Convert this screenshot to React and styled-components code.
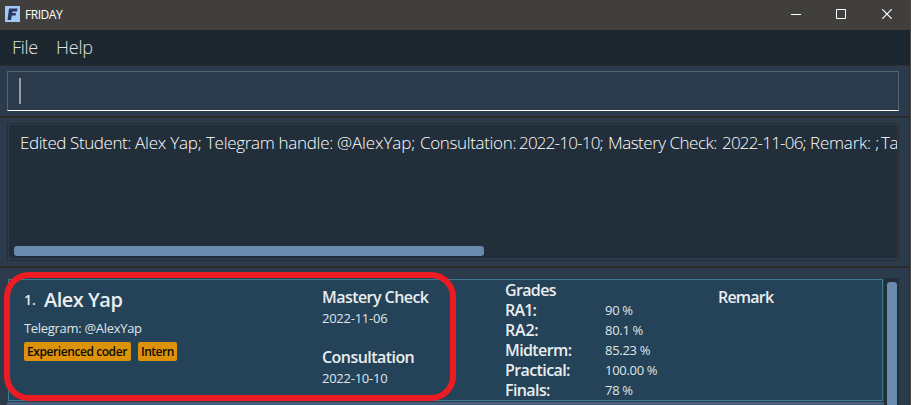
import React from "react";
import styled, { createGlobalStyle } from "styled-components";

const GlobalStyle = createGlobalStyle`
  * { box-sizing: border-box; }
  html, body { margin: 0; background: #2b3b4b; overflow: hidden; }
`;

const Window = styled.div`
  position: relative;
  width: 911px;
  height: 405px;
  overflow: hidden;
  display: flex;
  flex-direction: column;
  background: #2b3b4b;
  border-right: 1px solid #4c4a49;
  font-family: "Open Sans", "Noto Sans", sans-serif;
  white-space: nowrap;
`;

const TitleBar = styled.header`
  flex: none;
  height: 30px;
  margin-right: -1px;
  padding-left: 5px;
  display: flex;
  align-items: center;
  background: #413f3d;
`;

const AppIcon = styled.svg`
  flex: none;
  width: 15px;
  height: 16px;
  margin-top: -2px;
`;

const Title = styled.span`
  flex: 1;
  margin-left: 5px;
  margin-top: -1px;
  color: #fff;
  font-size: 12px;
  line-height: 16px;
  letter-spacing: -0.45px;
`;

const WindowButton = styled.svg`
  flex: none;
  width: 10px;
  height: 10px;
  margin-right: ${(p) => p.$gap}px;
  margin-top: -2px;
  fill: none;
  stroke: #fff;
`;

const MenuBar = styled.nav`
  flex: none;
  height: 36px;
  padding: 5px 12px 0;
  display: flex;
  gap: 18px;
  background: #1d2730;
  border-bottom: 1px solid #2b2f33;
`;

const MenuItem = styled.span`
  width: ${(p) => p.$width}px;
  color: #e0e1e3;
  font-size: 18px;
  font-weight: 300;
  line-height: 24px;
  letter-spacing: ${(p) => p.$tracking}px;
`;

const Pane = styled.section`
  flex: none;
  height: ${(p) => p.$height}px;
  padding: 5px 10px 0 7px;
  border-right: 1px solid #2e2e2e;
  border-bottom: 2px solid #2a2a2a;
`;

const CommandField = styled.div`
  height: 40px;
  padding: 6px 11px;
  border: 1px solid #56626f;
  border-bottom-color: #fff;
`;

const Caret = styled.div`
  width: 2px;
  height: 26px;
  background: #959da5;
`;

const ResultBox = styled.div`
  height: 138px;
  padding: 1px;
  border: 1px solid #2b2d30;
`;

const ResultArea = styled.div`
  height: 133px;
  overflow: hidden;
  display: flex;
  flex-direction: column;
  justify-content: space-between;
  padding: 6px 0 2px;
  border-radius: 2px;
  background: #222e3a;
`;

const ResultText = styled.div`
  display: flex;
  padding-left: 11px;
  color: #fff;
  font-size: 17px;
  font-weight: 300;
  line-height: 24px;
`;

const ResultPart = styled.span`
  flex: none;
  width: ${(p) => p.$width}px;
  letter-spacing: ${(p) => p.$tracking}px;
`;

const HorizontalThumb = styled.div`
  width: 470px;
  height: 10px;
  margin-left: 5px;
  border-radius: 3px;
  background: #698bae;
`;

const ListPane = styled.section`
  flex: 1;
  display: flex;
  align-items: stretch;
  padding: 10px 10px 0 7px;
  border-right: 1px solid #2e2e2e;
`;

const StudentList = styled.div`
  flex: 1;
  display: flex;
  flex-direction: column;
`;

const StudentCard = styled.article`
  flex: none;
  height: 122px;
  margin: 1px;
  display: grid;
  grid-template-columns: 298px 183px 213px 1fr;
  padding-left: 15px;
  background: #254358;
  border: 1px solid #3a7d92;
`;

const NextCard = styled.div`
  flex: 1;
  background: #465d7c;
`;

const VerticalTrack = styled.div`
  flex: none;
  width: 15px;
  padding: 4px 2px 0 3px;
  background: #222e3a;
`;

const VerticalThumb = styled.div`
  height: 130px;
  border-radius: 3px;
  background: #698bae;
`;

const Identity = styled.div`
  display: flex;
  flex-direction: column;
  padding-top: 6px;
`;

const NameRow = styled.div`
  display: flex;
  align-items: center;
  height: 28px;
  margin-bottom: 4px;
  line-height: 28px;
`;

const Index = styled.span`
  width: 20px;
  color: #e4e8ea;
  font-size: 14px;
  font-weight: 600;
`;

const Name = styled.span`
  color: #e9edef;
  font-size: 20px;
  font-weight: 600;
  letter-spacing: -0.5px;
`;

const Detail = styled.span`
  color: #dfe5e9;
  font-size: 13px;
  line-height: 20px;
  letter-spacing: ${(p) => p.$tracking ?? -0.25}px;
`;

const Tags = styled.div`
  display: flex;
  gap: 7px;
  margin-top: 4px;
`;

const Tag = styled.span`
  width: ${(p) => p.$width}px;
  height: 19px;
  padding-left: 3px;
  border-radius: 2px;
  background: #dc930a;
  color: #0c0a06;
  font-size: 12px;
  font-weight: 600;
  line-height: 19px;
  letter-spacing: ${(p) => p.$tracking}px;
`;

const Column = styled.div`
  display: flex;
  flex-direction: column;
  padding-top: ${(p) => p.$top}px;
`;

const Entry = styled.div`
  display: flex;
  flex-direction: column;
  height: 60px;
`;

const Label = styled.span`
  height: 21px;
  color: #e9edef;
  font-size: 16px;
  font-weight: 600;
  line-height: 20px;
  letter-spacing: ${(p) => p.$tracking ?? -0.55}px;
`;

const GradeList = styled.div`
  display: grid;
  grid-template-columns: 100px 1fr;
  grid-auto-rows: 20px;
  margin-top: -1px;
`;

const Highlight = styled.div`
  position: absolute;
  left: 4px;
  top: 272px;
  width: 452px;
  height: 129px;
  border: 6px solid #ed1c24;
  border-radius: 25px;
`;

const result = [
  ["Edited Student: ", 115, -0.41],
  ["Alex Yap; ", 71, -0.2],
  ["Telegram handle: ", 131, -0.3],
  ["@AlexYap; ", 83, -0.1],
  ["Consultation: ", 99, -0.35],
  ["2022-10-10; ", 89, -0.8],
  ["Mastery Check: ", 114, -0.5],
  ["2022-11-06; ", 88, -0.8],
  ["Remark: ; ", 71, -0.2],
  ["Tags: ", 50, -0.3],
];

const grades = [
  ["RA1:", "90 %", -0.8],
  ["RA2:", "80.1 %", -0.2],
  ["Midterm:", "85.23 %", -0.6],
  ["Practical:", "100.00 %", -0.6],
  ["Finals:", "78 %", -0.6],
];

export default function App() {
  return (
    <Window>
      <GlobalStyle />
      <TitleBar>
        <AppIcon viewBox="0 0 15 16">
          <rect width="15" height="16" fill="#9fcaf8" />
          <path d="M4 2.5H12.5L12 5.5H7.5L7.2 7H11L10.5 9.5H6.8L6 14H2.5Z" fill="#2d355c" />
        </AppIcon>
        <Title>FRIDAY</Title>
        <WindowButton viewBox="0 0 10 10" $gap={35}><path d="M0 5.5H10" /></WindowButton>
        <WindowButton viewBox="0 0 10 10" $gap={36}><path d="M.5 .5H9.5V9.5H.5Z" /></WindowButton>
        <WindowButton viewBox="0 0 10 10" $gap={19}><path d="M.3 .3L9.7 9.7M9.7 .3L.3 9.7" strokeWidth="1.2" /></WindowButton>
      </TitleBar>
      <MenuBar>
        <MenuItem $width={26} $tracking={-0.3}>File</MenuItem>
        <MenuItem $width={37} $tracking={-0.2}>Help</MenuItem>
      </MenuBar>
      <Pane $height={52}>
        <CommandField><Caret /></CommandField>
      </Pane>
      <Pane $height={150}>
        <ResultBox>
          <ResultArea>
            <ResultText>
              {result.map(([text, width, tracking]) => (
                <ResultPart key={text} $width={width} $tracking={tracking}>{text}</ResultPart>
              ))}
            </ResultText>
            <HorizontalThumb />
          </ResultArea>
        </ResultBox>
      </Pane>
      <ListPane>
        <StudentList>
          <StudentCard>
            <Identity>
              <NameRow>
                <Index>1.</Index>
                <Name>Alex Yap</Name>
              </NameRow>
              <Detail $tracking={-0.3}>Telegram: @AlexYap</Detail>
              <Tags>
                <Tag $width={107} $tracking={-0.42}>Experienced coder</Tag>
                <Tag $width={39} $tracking={-0.5}>Intern</Tag>
              </Tags>
            </Identity>
            <Column $top={7}>
              <Entry>
                <Label>Mastery Check</Label>
                <Detail>2022-11-06</Detail>
              </Entry>
              <Entry>
                <Label>Consultation</Label>
                <Detail>2022-10-10</Detail>
              </Entry>
            </Column>
            <Column $top={0}>
              <Label $tracking={-0.65}>Grades</Label>
              <GradeList>
                {grades.map(([label, value, tracking]) => (
                  <React.Fragment key={label}>
                    <Label $tracking={tracking}>{label}</Label>
                    <Detail $tracking={-0.3}>{value}</Detail>
                  </React.Fragment>
                ))}
              </GradeList>
            </Column>
            <Column $top={7}>
              <Label $tracking={-0.8}>Remark</Label>
            </Column>
          </StudentCard>
          <NextCard />
        </StudentList>
        <VerticalTrack><VerticalThumb /></VerticalTrack>
      </ListPane>
      <Highlight />
    </Window>
  );
}
